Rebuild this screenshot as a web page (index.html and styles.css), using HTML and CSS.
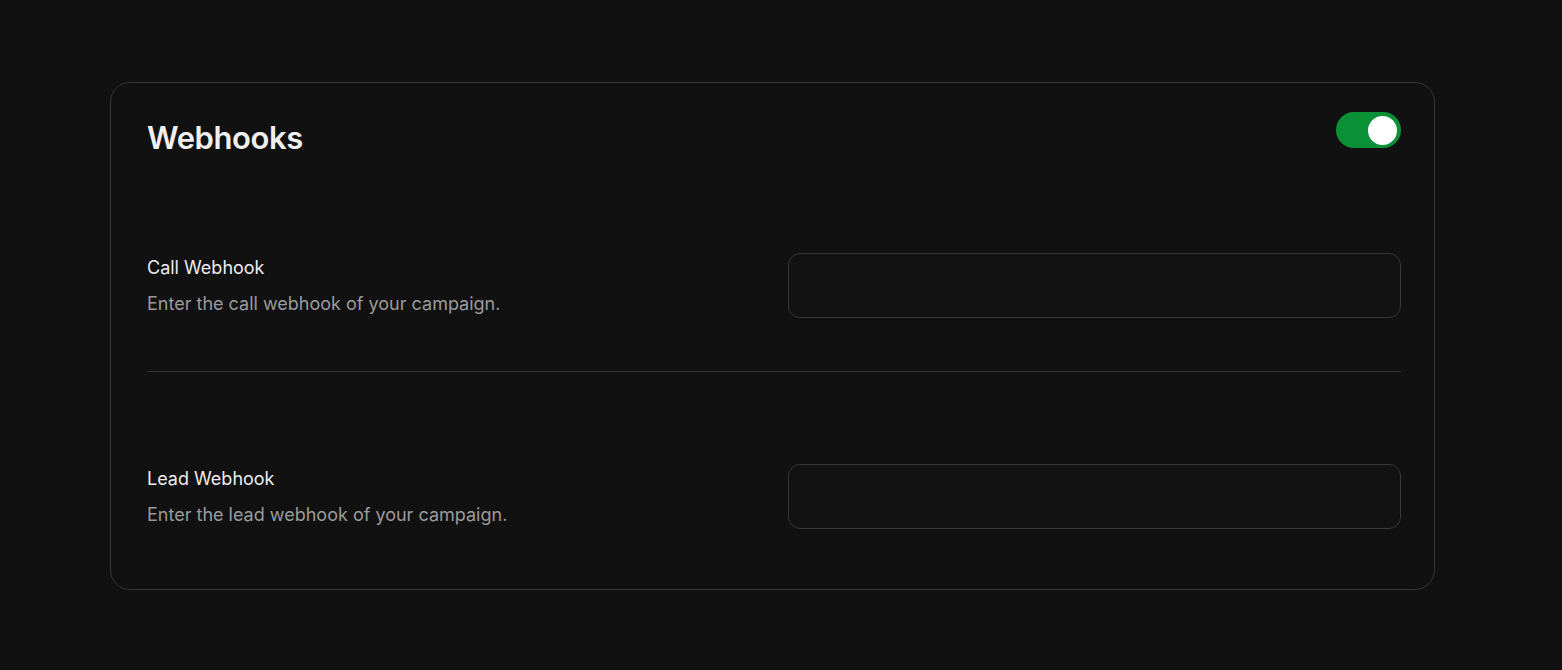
FILE: index.html
```html
<!DOCTYPE html>
<html lang="en">
<head>
<meta charset="utf-8">
<title>Webhooks</title>
<link rel="stylesheet" href="styles.css">
</head>
<body>
<main class="page">
  <section class="card">
    <header class="card-header">
      <h1 class="title">Webhooks</h1>
      <button class="toggle is-on" type="button" aria-pressed="true"><span class="knob"></span></button>
    </header>
    <div class="row row-first">
      <div class="field-text">
        <div class="label">Call Webhook</div>
        <div class="desc">Enter the call webhook of your campaign.</div>
      </div>
      <input class="input" type="text">
    </div>
    <hr class="divider">
    <div class="row row-second">
      <div class="field-text">
        <div class="label">Lead Webhook</div>
        <div class="desc">Enter the lead webhook of your campaign.</div>
      </div>
      <input class="input" type="text">
    </div>
  </section>
</main>
</body>
</html>
```
FILE: styles.css
```css
* { box-sizing: border-box; }
html, body {
  margin: 0;
  background: #111111;
  font-family: Inter, "Noto Sans", sans-serif;
  color: #ececec;
}
.page {
  padding: 82px 127px 0 110px;
}
.card {
  width: 1325px;
  height: 508px;
  border: 1px solid #363636;
  border-radius: 20px;
  padding: 29px 33px 0 36px;
}
.card-header {
  display: flex;
  justify-content: space-between;
  align-items: flex-start;
}
.title {
  margin: 8px 0 0 0;
  font-size: 31px;
  font-weight: 600;
  letter-spacing: -0.4px;
  line-height: 36px;
  color: #efefef;
}
.toggle {
  width: 65px;
  height: 36px;
  border: none;
  border-radius: 18px;
  background: #0b9135;
  padding: 0;
  display: flex;
  align-items: center;
  justify-content: flex-end;
  padding-right: 4px;
}
.knob {
  width: 29px;
  height: 29px;
  border-radius: 50%;
  background: #ffffff;
}
.row {
  display: flex;
  align-items: center;
}
.row-first { margin-top: 97px; }
.row-second { margin-top: 92px; }
.field-text {
  width: 641px;
  flex: none;
}
.label {
  font-size: 18px;
  font-weight: 400;
  color: #ececec;
  line-height: 24px;
}
.desc {
  margin-top: 12px;
  font-size: 18px;
  color: #9b9b9b;
  line-height: 24px;
}
.input {
  flex: 1;
  height: 65px;
  background: #121212;
  border: 1.5px solid #383838;
  border-radius: 12px;
  outline: none;
}
.divider {
  margin: 53px 0 0 0;
  border: none;
  height: 1px;
  background: #353535;
}
```
